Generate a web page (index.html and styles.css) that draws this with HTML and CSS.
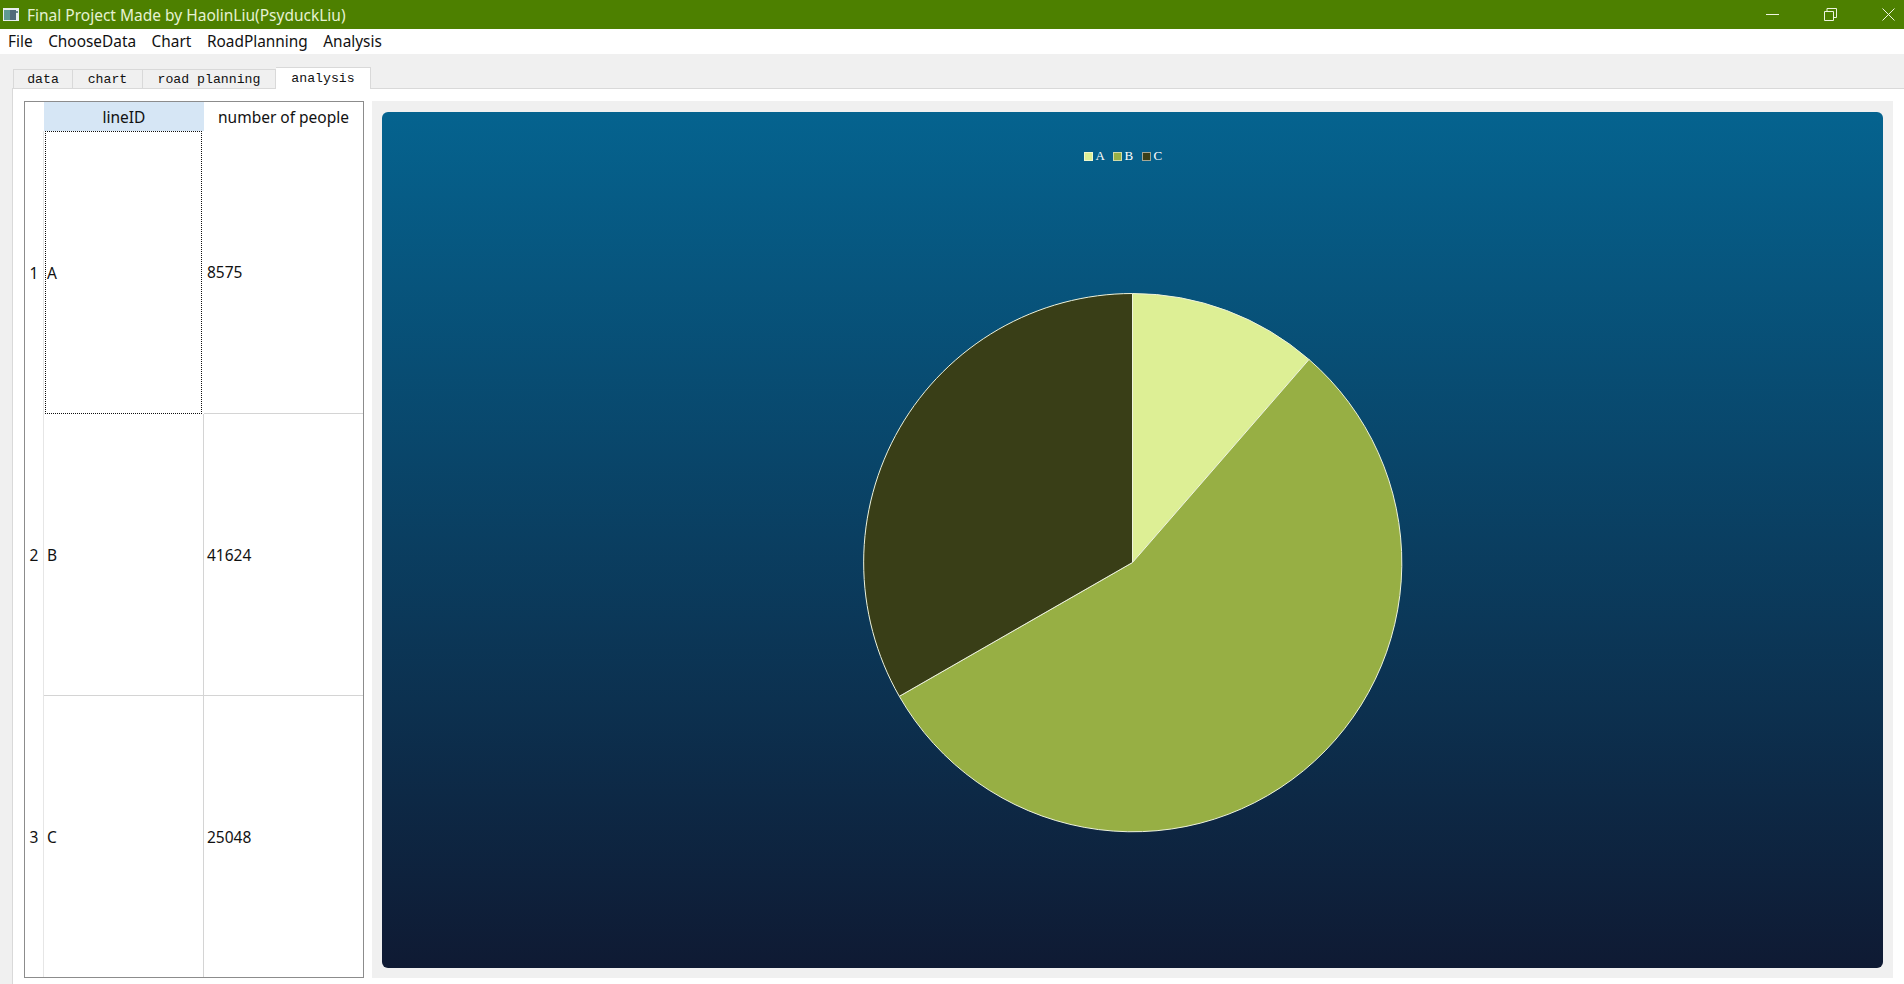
FILE: index.html
```html
<!DOCTYPE html>
<html>

<head>
    <title>Final Project Made by HaolinLiu(PsyduckLiu)</title>
    <link rel="stylesheet" href="styles.css">
</head>

<body>
    <div class="titlebar">
        <svg class="app-icon" width="16" height="13" viewBox="0 0 16 13">
            <rect width="16" height="13" fill="#e8eef0" />
            <rect x="1" y="2" width="6" height="10" fill="#5f9a94" />
            <rect x="7" y="2" width="6" height="10" fill="#51697a" />
            <rect x="13" y="3" width="2" height="2" fill="#6a8a90" />
        </svg>
        <span class="title-text">Final Project Made by HaolinLiu(PsyduckLiu)</span>
        <div class="win-btns">
            <svg width="13" height="13" viewBox="0 0 13 13">
                <path d="M0 6.5H13" stroke="#eef5e0" fill="none" />
            </svg>
            <svg width="13" height="13" viewBox="0 0 13 13">
                <path d="M.5 3.5h9v9h-9zM3 3.5V.5h9.5v9h-3" stroke="#eef5e0" fill="none" />
            </svg>
            <svg width="13" height="13" viewBox="0 0 13 13">
                <path d="M.5.5l12 12M12.5.5l-12 12" stroke="#eef5e0" fill="none" />
            </svg>
        </div>
    </div>

    <div class="menubar">
        <span class="menu-item">File</span>
        <span class="menu-item">ChooseData</span>
        <span class="menu-item">Chart</span>
        <span class="menu-item">RoadPlanning</span>
        <span class="menu-item">Analysis</span>
    </div>

    <div class="content">
        <div class="tabs">
            <div class="tab tab-data">data</div>
            <div class="tab tab-chart">chart</div>
            <div class="tab tab-road">road planning</div>
            <div class="tab tab-active">analysis</div>
        </div>

        <div class="pane">
            <div class="table">
                <div class="cell corner"></div>
                <div class="cell head head-sel">lineID</div>
                <div class="cell head">number of people</div>

                <div class="cell row-num">1</div>
                <div class="cell data col1 focused">A</div>
                <div class="cell data col2">8575</div>

                <div class="cell row-num">2</div>
                <div class="cell data col1">B</div>
                <div class="cell data col2">41624</div>

                <div class="cell row-num">3</div>
                <div class="cell data col1 last">C</div>
                <div class="cell data col2 last">25048</div>
            </div>

            <div class="chart-frame">
                <div class="chart">
                    <div class="legend">
                        <span class="swatch swatch-a"></span><span class="legend-label">A</span>
                        <span class="swatch swatch-b"></span><span class="legend-label">B</span>
                        <span class="swatch swatch-c"></span><span class="legend-label">C</span>
                    </div>
                    <svg class="pie" width="1501" height="856" viewBox="0 0 1501 856">
                        <g stroke="#eef3dc" stroke-width="1">
                            <path d="M750.5 450.5V181.5A269 269 0 0 1 927 247.5Z" fill="#ddef95" />
                            <path d="M750.5 450.5L927 247.5A269 269 0 1 1 517.3 584.3Z" fill="#97af44" />
                            <path d="M750.5 450.5L517.3 584.3A269 269 0 0 1 750.5 181.5Z" fill="#393e17" />
                        </g>
                    </svg>
                </div>
            </div>
        </div>
    </div>
</body>

</html>
```

FILE: styles.css
```css
* {
    box-sizing: border-box;
}

html,
body {
    margin: 0;
    height: 100%;
    overflow: hidden;
}

body {
    display: flex;
    flex-direction: column;
    background-color: #f0f0f0;
    font-family: "Noto Sans", sans-serif;
    color: #111;
}

.titlebar {
    display: flex;
    align-items: center;
    height: 29px;
    flex-shrink: 0;
    padding: 0 9px 0 3px;
    background-color: #4d8000;
}

.app-icon {
    margin-right: 8px;
}

.title-text {
    font-size: 15.5px;
    color: #e6f2d2;
}

.win-btns {
    display: flex;
    gap: 45px;
    margin-left: auto;
}

.menubar {
    display: flex;
    align-items: center;
    gap: 15.5px;
    height: 25px;
    flex-shrink: 0;
    padding: 0 8px;
    background-color: #fff;
    font-size: 15.4px;
}

.content {
    display: flex;
    flex-direction: column;
    flex: 1;
    min-height: 0;
    padding: 12px 0 0 12px;
}

.tabs {
    display: flex;
    height: 22px;
    flex-shrink: 0;
    align-items: flex-end;
    padding-left: 1px;
    font-family: "Liberation Mono", monospace;
    font-size: 13.2px;
}

.tab {
    display: flex;
    align-items: center;
    justify-content: center;
    height: 19px;
    border: 1px solid #d9d9d9;
    border-bottom: none;
    border-left: none;
    background-color: #f0f0f0;
}

.tab-data {
    width: 60px;
    border-left: 1px solid #d9d9d9;
}

.tab-chart {
    width: 70px;
}

.tab-road {
    width: 133px;
}

.tab-active {
    width: 95px;
    height: 22px;
    margin-bottom: -1px;
    background-color: #fff;
    position: relative;
}

.pane {
    display: flex;
    flex: 1;
    min-height: 0;
    gap: 8px;
    padding: 12px 0 6px 11px;
    background-color: #fff;
    border-top: 1px solid #d9d9d9;
    border-left: 1px solid #d9d9d9;
}

.table {
    display: grid;
    grid-template-columns: 19px 160px 159px;
    grid-template-rows: 29px 283px 282px 281px;
    width: 340px;
    flex-shrink: 0;
    border: 1px solid #8c8c8c;
    font-size: 15.5px;
}

.cell {
    display: flex;
    align-items: center;
}

.head {
    justify-content: center;
}

.head-sel {
    background-color: #d6e6f5;
}

.row-num {
    justify-content: center;
    border-right: 1px solid #e6e6e6;
}

.corner {
    border-right: none;
}

.data {
    padding-left: 3px;
    border-bottom: 1px solid #d4d4d4;
}

.col1 {
    border-right: 1px solid #d4d4d4;
}

.last {
    border-bottom: none;
}

.focused {
    margin: 0 2px 0 1px;
    border: 1px dotted #111;
    padding-left: 1px;
}

.chart-frame {
    flex: 1;
    margin-right: 11px;
    padding: 11px 10px 10px;
    background-color: #f0f0f0;
}

.chart {
    position: relative;
    height: 100%;
    border-radius: 6px;
    background: linear-gradient(to bottom, #05638f, #0f1a33);
}

.legend {
    display: flex;
    align-items: center;
    justify-content: center;
    padding-top: 36px;
    padding-right: 11px;
    font-family: "Liberation Serif", serif;
    font-size: 13px;
    color: #fff;
}

.swatch {
    width: 9px;
    height: 9px;
    margin-right: 3px;
    border: 1px solid rgba(255, 255, 255, 0.55);
}

.swatch-a {
    background-color: #ddef95;
}

.swatch-b {
    background-color: #98b045;
}

.swatch-c {
    background-color: #3a3f18;
}

.legend-label {
    width: 17px;
}

.pie {
    position: absolute;
    top: 0;
    left: 0;
}
```
